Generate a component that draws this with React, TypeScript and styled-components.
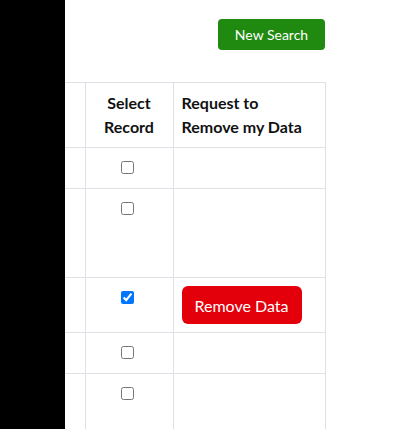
import * as React from 'react';
import styled, { createGlobalStyle } from 'styled-components';

const colors = {
  black: '#000000',
  text: '#212529',
  border: '#dee2e6',
  green: '#1f8a0f',
  red: '#e3000b',
  white: '#ffffff'
};

const GlobalStyle = createGlobalStyle`
  html, body {
    margin: 0;
    padding: 0;
    background: ${colors.white};
    font-family: Lato, "Open Sans", sans-serif;
    color: ${colors.text};
  }
`;

const Page = styled.div`
  display: flex;
  height: 429px;
  overflow: hidden;
`;

const Sidebar = styled.div`
  flex: 0 0 65px;
  background: ${colors.black};
`;

const Main = styled.main`
  flex: 1;
  display: flex;
  flex-direction: column;
  align-items: flex-start;
  padding-top: 19px;
`;

const Toolbar = styled.div`
  width: 260px;
  display: flex;
  justify-content: flex-end;
  margin-bottom: 32px;
`;

const Button = styled.button<{ $variant: 'green' | 'red' }>`
  border: none;
  color: ${colors.white};
  font-family: Lato, sans-serif;
  cursor: pointer;
  background: ${(p) => (p.$variant === 'green' ? colors.green : colors.red)};
  border-radius: ${(p) => (p.$variant === 'green' ? '4px' : '6px')};
  font-size: ${(p) => (p.$variant === 'green' ? '14px' : '16px')};
  height: ${(p) => (p.$variant === 'green' ? '31px' : '38px')};
  width: ${(p) => (p.$variant === 'green' ? '107px' : '120px')};
  padding: 0;
  display: block;
`;

const Table = styled.table`
  border-collapse: collapse;
  table-layout: fixed;
  width: 260px;
`;

const Th = styled.th<{ $align?: string }>`
  border: 1px solid ${colors.border};
  padding: 8px;
  font-size: 16px;
  line-height: 24px;
  font-weight: 700;
  color: #111;
  text-align: ${(p) => p.$align || 'center'};
  vertical-align: top;

  &:first-child {
    border-left: none;
  }
`;

const Td = styled.td<{ $center?: boolean; $h: number }>`
  border: 1px solid ${colors.border};
  padding: 8px;
  height: ${(p) => p.$h}px;
  font-size: 16px;
  line-height: 24px;
  vertical-align: top;
  text-align: ${(p) => (p.$center ? 'center' : 'left')};
  box-sizing: content-box;

  &:first-child {
    border-left: none;
  }
`;

const CheckWrap = styled.div`
  display: flex;
  justify-content: center;
  padding-top: 5px;
  padding-right: 4px;
`;

const Check = styled.input`
  width: 13px;
  height: 13px;
  margin: 0;
`;

const rows = [
  { h: 24, checked: false },
  { h: 72, checked: false },
  { h: 38, checked: true },
  { h: 24, checked: false },
  { h: 72, checked: false }
];

export default function App() {
  return (
    <>
      <GlobalStyle />
      <Page>
        <Sidebar />
        <Main>
          <Toolbar>
            <Button $variant="green">New Search</Button>
          </Toolbar>
          <Table>
            <colgroup>
              <col style={{ width: 20 }} />
              <col style={{ width: 88 }} />
              <col style={{ width: 152 }} />
            </colgroup>
            <thead>
              <tr>
                <Th />
                <Th>Select Record</Th>
                <Th $align="left">Request to Remove my Data</Th>
              </tr>
            </thead>
            <tbody>
              {rows.map((r, i) => (
                <tr key={i}>
                  <Td $h={r.h} />
                  <Td $h={r.h} $center>
                    <CheckWrap>
                      <Check type="checkbox" defaultChecked={r.checked} />
                    </CheckWrap>
                  </Td>
                  <Td $h={r.h}>
                    {r.checked && <Button $variant="red">Remove Data</Button>}
                  </Td>
                </tr>
              ))}
            </tbody>
          </Table>
        </Main>
      </Page>
    </>
  );
}
